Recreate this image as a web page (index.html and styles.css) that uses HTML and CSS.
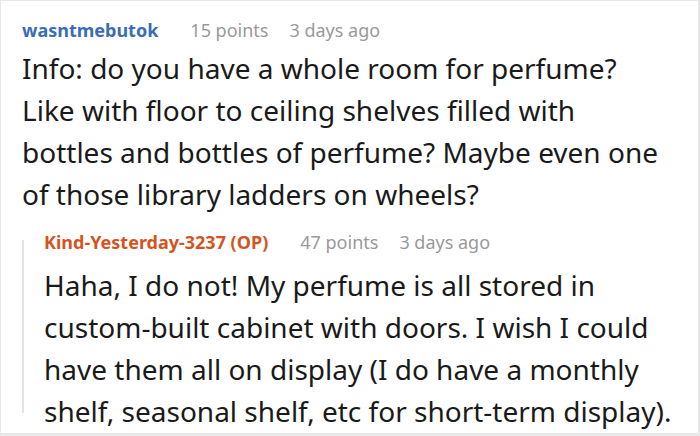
FILE: index.html
```html
<!DOCTYPE html>
<html>
<head>
<meta charset="utf-8">
<link rel="stylesheet" href="styles.css">
</head>
<body>
<div class="frame">
  <div class="comment">
    <div class="meta">
      <span class="user user-blue">wasntmebutok</span>
      <span class="points">15 points</span>
      <span class="time">3 days ago</span>
    </div>
    <p class="text">Info: do you have a whole room for perfume? Like with floor to ceiling shelves filled with bottles and bottles of perfume? Maybe even one of those library ladders on wheels?</p>
    <div class="reply">
      <div class="meta">
        <span class="user user-orange">Kind-Yesterday-3237 (OP)</span>
        <span class="points">47 points</span>
        <span class="time">3 days ago</span>
      </div>
      <p class="text text-reply">Haha, I do not! My perfume is all stored in custom-built cabinet with doors. I wish I could have them all on display (I do have a monthly shelf, seasonal shelf, etc for short-term display).</p>
    </div>
  </div>
</div>
</body>
</html>
```
FILE: styles.css
```css
html, body {
  margin: 0;
  padding: 0;
  background: #ffffff;
}
.frame {
  width: 700px;
  height: 436px;
  box-sizing: border-box;
  border: 2px solid #e8e8e8;
  border-top-width: 1px;
  border-left-width: 1px;
  border-bottom-width: 3px;
  overflow: hidden;
  font-family: "Noto Sans", "Open Sans", sans-serif;
}
.comment {
  padding: 17px 0 0 21px;
}
.meta {
  display: flex;
  align-items: baseline;
  font-size: 18px;
  line-height: 24px;
}
.user {
  font-weight: 700;
}
.user-blue { color: #3b6cb7; }
.user-orange { color: #d4541f; }
.points {
  color: #999999;
  margin-left: 32px;
}
.time {
  color: #999999;
  margin-left: 21px;
}
.text {
  margin: 5px 0 0 0;
  font-size: 28px;
  line-height: 42px;
  color: #1a1a1a;
  width: 645px;
}
.reply {
  position: relative;
  margin: 15px 0 0 0;
  padding-left: 22px;
}
.reply::before {
  content: "";
  position: absolute;
  left: 0;
  top: 10px;
  bottom: 19px;
  width: 2px;
  background: #e4e4e4;
}
.text-reply {
  margin-top: 10px;
  line-height: 42px;
  width: 634px;
}
```
